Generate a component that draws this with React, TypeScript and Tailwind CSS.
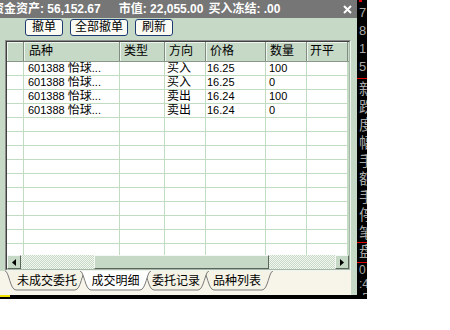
import React from 'react'

const widths = ['w-[17px]', 'w-[96px]', 'w-[45px]', 'w-[41px]', 'w-[60px]', 'w-[41px]', 'w-[41px]']
const headPad = ['pl-0', 'pl-[5px]', 'pl-[4px]', 'pl-[4px]', 'pl-[4px]', 'pl-[4px]', 'pl-[3px]']
const cellPad = ['pl-0', 'pl-[4px]', 'pl-[4px]', 'pl-[2px]', 'pl-[1px]', 'pl-[3px]', 'pl-[3px]']
const headers = ['', '品种', '类型', '方向', '价格', '数量', '开平']

const trades = [
  { dir: '买入', price: '16.25', qty: '100' },
  { dir: '买入', price: '16.25', qty: '0' },
  { dir: '卖出', price: '16.24', qty: '100' },
  { dir: '卖出', price: '16.24', qty: '0' },
]

const sideChars = ['新', '跌', '度', '幅', '手', '额', '手', '停', '笔']

function Btn({ label, w }: { label: string; w: string }) {
  return (
    <button
      className={`${w} h-[17px] rounded-[3px] border border-[#1d3b73] bg-[#fbfbf4] text-[12px] leading-[15px] text-black`}
    >
      {label}
    </button>
  )
}

function Row({ cells }: { cells: React.ReactNode[] }) {
  return (
    <div className="flex h-[14px] shrink-0">
      {cells.map((c, i) => (
        <div
          key={i}
          className={`${widths[i]} ${cellPad[i]} h-[14px] border-r border-b border-[#c2dcc2] bg-white text-[11px] leading-[13px] text-black whitespace-nowrap overflow-hidden`}
        >
          {c}
        </div>
      ))}
    </div>
  )
}

export default function App() {
  const empty = Array.from({ length: 10 }, () => ['', '', '', '', '', '', ''])

  return (
    <div className="relative w-[450px] h-[330px] bg-white overflow-hidden font-['Liberation_Sans','Noto_Sans_CJK_SC',sans-serif]">
      <div className="flex">
        {/* window */}
        <div className="w-[357px] h-[295px] bg-[#c6d8c6] flex flex-col">
          <div className="h-[18px] bg-[#767676] flex items-center justify-between overflow-hidden text-white font-bold text-[12px] whitespace-nowrap">
            <div className="flex ml-[-8px]">
              <span>资金资产: 56,152.67</span>
              <span className="ml-[18px]">市值: 22,055.00</span>
              <span className="ml-[5px]">买入冻结: .00</span>
            </div>
            <svg width="9" height="9" viewBox="0 0 9 9" className="mr-[5px] shrink-0">
              <path d="M1 1 L8 8 M8 1 L1 8" stroke="#fff" strokeWidth="2" />
            </svg>
          </div>

          <div className="h-[22px] flex items-start pt-[1px] pl-[25px] gap-[7px]">
            <Btn label="撤单" w="w-[38px]" />
            <Btn label="全部撤单" w="w-[58px]" />
            <Btn label="刷新" w="w-[38px]" />
          </div>

          {/* grid frame */}
          <div className="ml-[5px] w-[346px] h-[231px] border-t border-l border-[#8c8c8c] border-r border-b border-r-[#eef4ee] border-b-[#eef4ee]">
            <div className="h-full border-t border-l border-[#404040] border-r border-b border-r-[#a8b8a8] border-b-[#a8b8a8] flex flex-col">
              <div className="flex h-[20px] border-b border-[#8a988a] shrink-0">
                {headers.map((h, i) => (
                  <div
                    key={i}
                    className={`${widths[i]} ${headPad[i]} h-[19px] border-r border-[#808c80] shadow-[inset_1px_1px_0_#eef5ee] text-[12px] leading-[19px] text-black`}
                  >
                    {h}
                  </div>
                ))}
              </div>
              <div className="h-[193px] overflow-hidden flex flex-col">
                {trades.map((t, i) => (
                  <Row
                    key={i}
                    cells={[
                      '',
                      <>
                        601388 <span className="text-[12px]">怡球</span>...
                      </>,
                      '',
                      <span className="text-[12px]">{t.dir}</span>,
                      t.price,
                      t.qty,
                      '',
                    ]}
                  />
                ))}
                {empty.map((r, i) => (
                  <Row key={'e' + i} cells={r} />
                ))}
              </div>
              {/* scrollbar */}
              <div className="h-[14px] flex shrink-0">
                <div className="w-[14px] h-[14px] bg-[#c6d8c6] border-t border-l border-[#f4f8f4] border-r border-b border-r-[#5a645a] border-b-[#5a645a] flex items-center justify-center">
                  <svg width="4" height="7" viewBox="0 0 4 7">
                    <path d="M4 0 L0 3.5 L4 7 Z" fill="#000" />
                  </svg>
                </div>
                <div className="w-[73px] h-[14px] bg-[repeating-conic-gradient(#c6d8c6_0%_25%,#f4f6f0_0%_50%)] bg-[length:2px_2px]" />
                <div className="w-[175px] h-[14px] bg-[#c6d8c6] border-t border-l border-[#f4f8f4] border-r border-b border-r-[#5a645a] border-b-[#5a645a]" />
                <div className="flex-1 h-[14px] bg-[repeating-conic-gradient(#c6d8c6_0%_25%,#f4f6f0_0%_50%)] bg-[length:2px_2px]" />
                <div className="w-[14px] h-[14px] bg-[#c6d8c6] border-t border-l border-[#f4f8f4] border-r border-b border-r-[#5a645a] border-b-[#5a645a] flex items-center justify-center">
                  <svg width="4" height="7" viewBox="0 0 4 7">
                    <path d="M0 0 L4 3.5 L0 7 Z" fill="#000" />
                  </svg>
                </div>
              </div>
            </div>
          </div>

          {/* tabs */}
          <div className="relative w-[351px] h-[24px] bg-[#f7f4ea]">
            <svg width="351" height="24" className="absolute inset-0">
              <path d="M5 0 C9 0 10 19 16 19 L75 19 C81 19 82 0 86 0" fill="#f5f2e6" stroke="#7c7c7c" />
              <path d="M203 0 C207 0 208 19 214 19 L262 19 C268 19 269 0 273 0" fill="#f5f2e6" stroke="#7c7c7c" />
              <path d="M143 0 C147 0 148 19 154 19 L198 19 C204 19 205 0 209 0" fill="#f5f2e6" stroke="#7c7c7c" />
              <path d="M80 0 C84 0 85 19 91 19 L140 19 C146 19 147 0 151 0" fill="#ffffff" stroke="#7c7c7c" />
            </svg>
            <div className="relative flex h-[20px] text-[12px] leading-[21px] text-black whitespace-nowrap">
              <span className="ml-[17px] w-[60px] text-center">未成交委托</span>
              <span className="ml-[14px] w-[49px] text-center">成交明细</span>
              <span className="ml-[12px] w-[48px] text-center">委托记录</span>
              <span className="ml-[10px] w-[54px] text-center">品种列表</span>
            </div>
          </div>
        </div>

        {/* black strip of the screen behind */}
        <div className="w-[10px] h-[295px] bg-black overflow-hidden flex flex-col pl-[2px] text-[#a8a8a8] whitespace-nowrap">
          <div className="w-[3px] h-[2px] bg-[#e00000] shrink-0" />
          <div className="pt-[2px] flex flex-col text-[13px] leading-[18px]">
            <span>7</span>
            <span>8</span>
            <span>1</span>
            <span>5</span>
          </div>
          <div className="ml-[-2px] mt-[2px] h-[1px] w-[10px] bg-[#e00000] shrink-0" />
          <div className="mt-[1px] flex flex-col text-[15px] leading-[18px]">
            {sideChars.map((c, i) => (
              <span key={i}>{c}</span>
            ))}
          </div>
          <div className="ml-[-2px] h-[1px] w-[10px] bg-[#e00000] shrink-0" />
          <span className="text-[15px] leading-[18px]">盘</span>
          <div className="ml-[-2px] mt-[1px] h-[1px] w-[10px] bg-[#e00000] shrink-0" />
          <div className="flex flex-col text-[12px] leading-[14px]">
            <span>0</span>
            <span>:4</span>
            <span>.5</span>
          </div>
        </div>
      </div>
      <div className="w-[367px] h-[4px] bg-black">
        <div className="w-[10px] h-[2px] bg-[#f0e000]" />
      </div>
    </div>
  )
}
